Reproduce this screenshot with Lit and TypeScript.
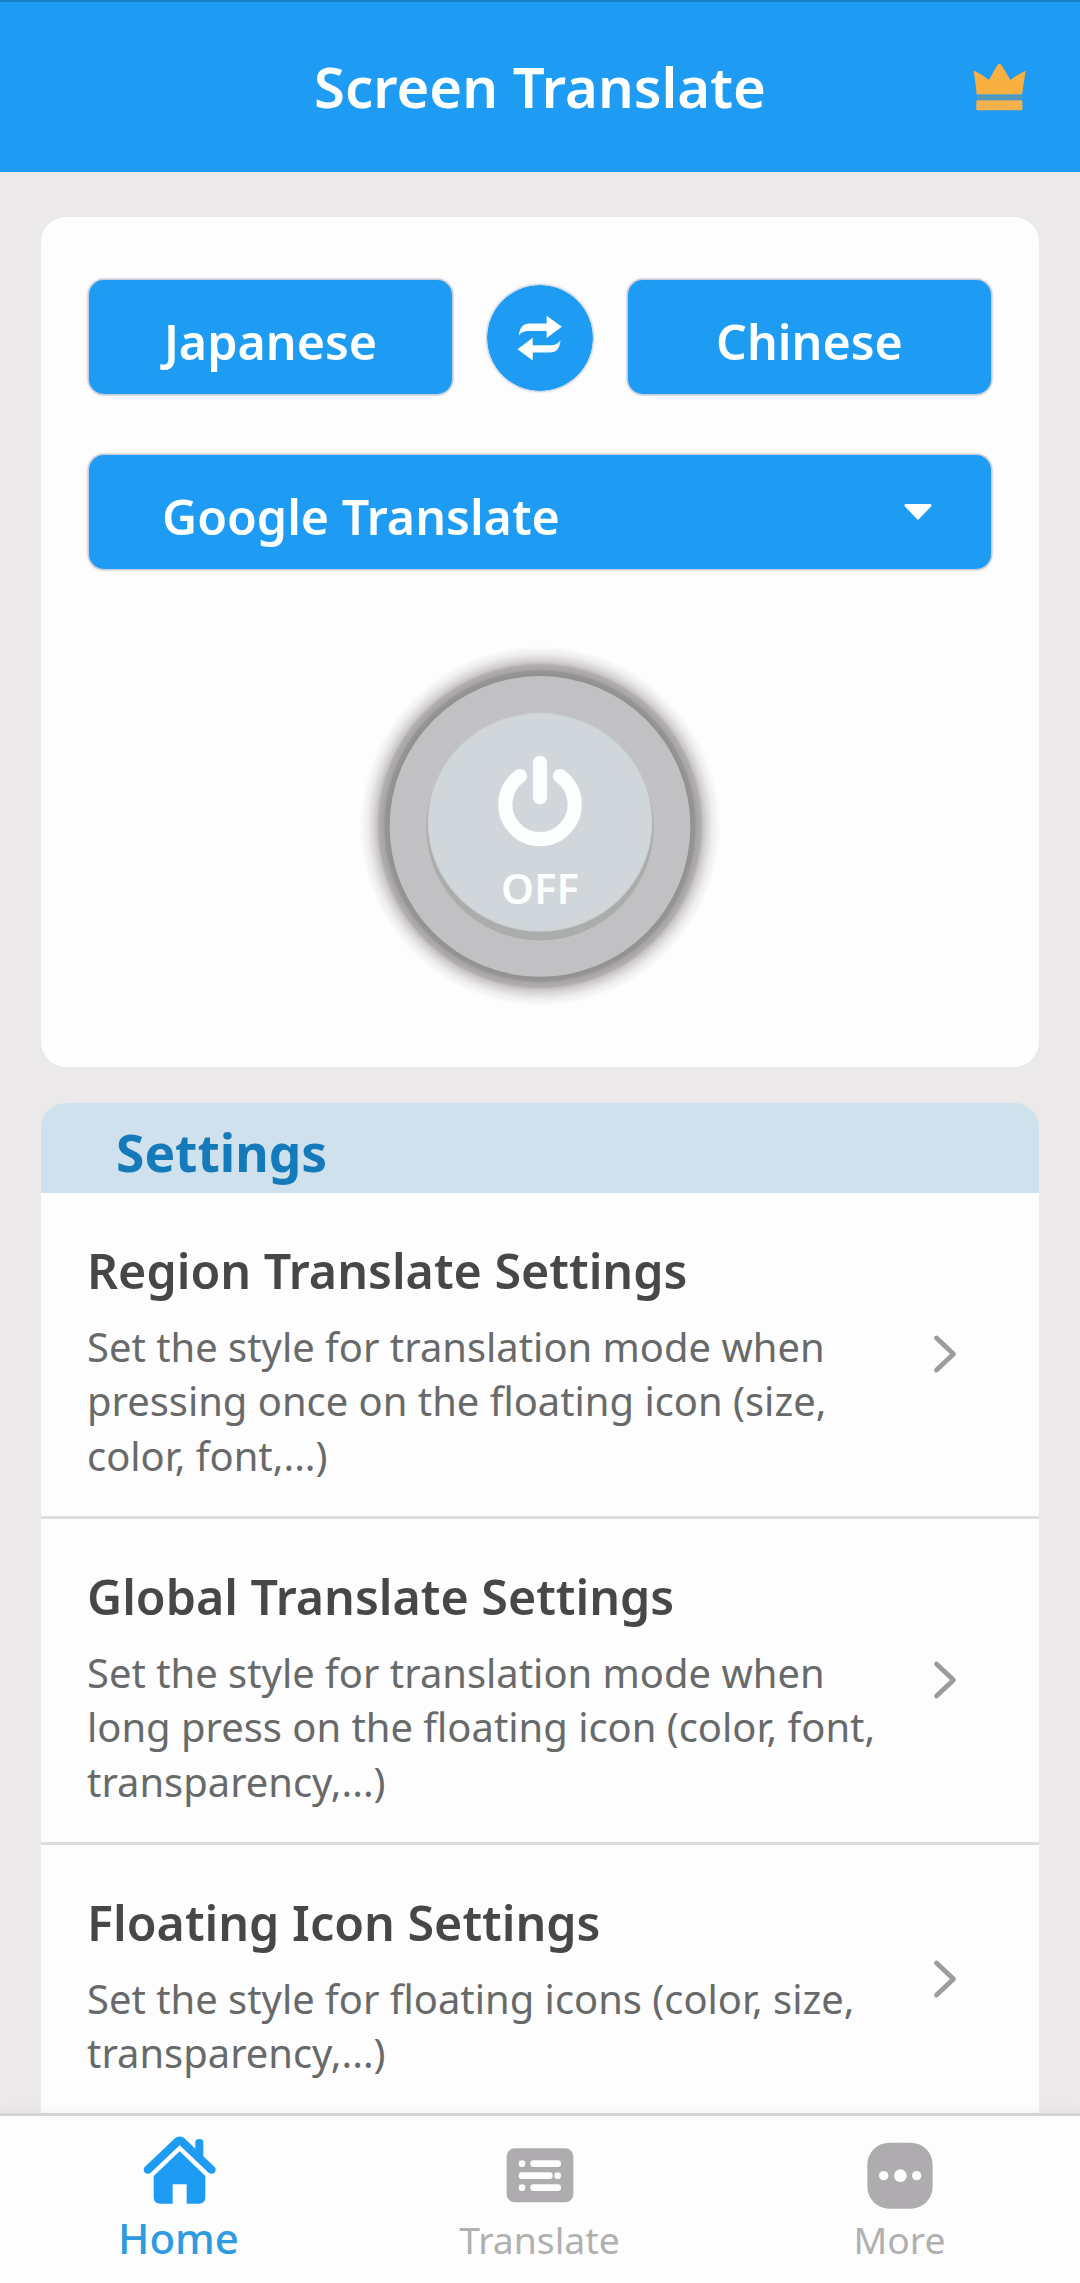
import { LitElement, html, css, svg } from "lit";
import { customElement, state } from "lit/decorators.js";
import { classMap } from "lit/directives/class-map.js";

interface SettingItem {
  title: string;
  lines: string[];
}

const SETTINGS: SettingItem[] = [
  {
    title: "Region Translate Settings",
    lines: [
      "Set the style for translation mode when",
      "pressing once on the floating icon (size,",
      "color, font,...)",
    ],
  },
  {
    title: "Global Translate Settings",
    lines: [
      "Set the style for translation mode when",
      "long press on the floating icon (color, font,",
      "transparency,...)",
    ],
  },
  {
    title: "Floating Icon Settings",
    lines: [
      "Set the style for floating icons (color, size,",
      "transparency,...)",
    ],
  },
];

const homeIcon = html`<svg class="tab-icon" viewBox="129 74 222 222">
  <path d="M143.5 178 L231 95 Q239 88 247 95 L334.5 178" fill="none" stroke="currentColor"
    stroke-width="25" stroke-linecap="round" stroke-linejoin="round" />
  <path d="M286 150 V96 Q286 86 298 86 Q310 86 310 96 V150 Z" fill="currentColor" />
  <path class="gap" d="M150 200 L239 115 L328 200" />
  <path d="M161 197 L239 123 L316 197 V261 Q316 280 297 280 H260 V222 H218 V280 H181 Q161 280 161 261 Z"
    fill="currentColor" />
</svg>`;

const translateIcon = html`<svg class="tab-icon" viewBox="189 74 222 222">
  <rect x="200" y="114" width="200" height="162" rx="24" fill="currentColor" />
  <g fill="#fdfdfd">
    <circle cx="246" cy="160" r="10" />
    <rect x="271" y="150" width="92" height="20" rx="9" />
    <rect x="236" y="186" width="102" height="20" rx="9" />
    <circle cx="353" cy="196" r="10" />
    <circle cx="246" cy="232" r="10" />
    <rect x="271" y="222" width="92" height="20" rx="9" />
  </g>
</svg>`;

const moreIcon = html`<svg class="tab-icon" viewBox="128 75 222 222">
  <rect x="141" y="98" width="196" height="198" rx="66" fill="currentColor" />
  <g fill="#fdfdfd">
    <circle cx="190" cy="197" r="14" />
    <circle cx="240" cy="197" r="19" />
    <circle cx="289" cy="197" r="14" />
  </g>
</svg>`;

const TABS = [
  { id: "home", label: "Home", icon: homeIcon },
  { id: "translate", label: "Translate", icon: translateIcon },
  { id: "more", label: "More", icon: moreIcon },
];

@customElement("power-button")
export class PowerButton extends LitElement {
  static styles = css`
    :host {
      display: block;
      width: 360px;
      height: 360px;
    }
    svg {
      display: block;
      width: 360px;
      height: 360px;
    }
    .caption {
      font: 600 42px "Noto Sans", sans-serif;
      fill: #fdfefe;
    }
  `;

  render() {
    return html`<svg viewBox="0 0 360 360" role="button">
      ${svg`
        <defs>
          <radialGradient id="halo" gradientUnits="userSpaceOnUse" cx="180" cy="180" r="180">
            <stop offset="0.83" stop-color="#918f90" />
            <stop offset="0.86" stop-color="#969495" />
            <stop offset="0.87" stop-color="#a6a4a5" />
            <stop offset="0.895" stop-color="#b0aeaf" />
            <stop offset="0.907" stop-color="#c8c6c7" />
            <stop offset="0.93" stop-color="#dbd9da" />
            <stop offset="0.96" stop-color="#efedee" />
            <stop offset="1" stop-color="#fdfdfd" />
          </radialGradient>
        </defs>
        <circle cx="180" cy="180.4" r="180" fill="url(#halo)" />
        <circle cx="180" cy="180.4" r="150.4" fill="#c1c1c3" />
        <circle cx="180" cy="180.7" r="113.7" fill="#abadad" />
        <ellipse cx="180" cy="176.2" rx="112.5" ry="109.6" fill="#c8cccd" />
        <ellipse cx="180" cy="176.2" rx="111.3" ry="108.6" fill="#d0d6d9" />
        <path d="M160 130 A34.7 34.7 0 1 0 200 130" fill="none" stroke="#fdfefe"
          stroke-width="14.2" stroke-linecap="round" />
        <path d="M180 116.8 V151.3" stroke="#fdfefe" stroke-width="14.2" stroke-linecap="round" />
        <text class="caption" x="180" y="257.5" text-anchor="middle">OFF</text>
      `}
    </svg>`;
  }
}

@customElement("setting-row")
export class SettingRow extends LitElement {
  static properties = { item: { attribute: false } };
  declare item: SettingItem;

  static styles = css`
    :host {
      display: flex;
      align-items: center;
      justify-content: space-between;
      box-sizing: border-box;
      padding: 44px 81px 33px 46px;
      border-bottom: 3px solid #dadcdd;
      background: #fdfdfd;
    }
    .title {
      font-size: 48.4px;
      font-weight: 600;
      line-height: 66px;
      color: #464848;
      white-space: nowrap;
    }
    .desc {
      margin-top: 17px;
      font-size: 39.9px;
      line-height: 54.33px;
      color: #686a6a;
    }
    .line {
      white-space: nowrap;
    }
    .chevron {
      flex: none;
      width: 26px;
      height: 42px;
      margin-bottom: 11px;
    }
  `;

  render() {
    return html`
      <div>
        <div class="title">${this.item.title}</div>
        <div class="desc">
          ${this.item.lines.map((l) => html`<div class="line">${l}</div>`)}
        </div>
      </div>
      <svg class="chevron" viewBox="0 0 26 42">
        <path d="M4.5 5 L21.5 21 L4.5 37" fill="none" stroke="#9a9c9d" stroke-width="4.8"
          stroke-linecap="round" stroke-linejoin="round" />
      </svg>
    `;
  }
}

@customElement("app-root")
export class AppRoot extends LitElement {
  @state() private active = "home";

  static styles = css`
    :host {
      display: flex;
      flex-direction: column;
      width: 1080px;
      height: 2283px;
      overflow: hidden;
      background: #ebe9e9;
      font-family: "Noto Sans", sans-serif;
    }
    .header {
      flex: none;
      display: grid;
      grid-template-columns: 1fr auto 1fr;
      align-items: center;
      box-sizing: border-box;
      height: 172px;
      border-top: 2px solid #1782c6;
      background: #1e9bf3;
    }
    .heading {
      grid-column: 2;
      margin: 0;
      font-size: 56.2px;
      font-weight: 600;
      line-height: 168px;
      padding-bottom: 2px;
      color: #fdfefe;
    }
    .crown {
      justify-self: end;
      width: 53px;
      height: 48px;
      margin-right: 54px;
    }
    .content {
      flex: 1;
      min-height: 0;
      overflow: hidden;
      padding: 45px 41px 0;
    }
    .card {
      display: flex;
      flex-direction: column;
      align-items: center;
      box-sizing: border-box;
      height: 850px;
      padding: 63px 48px 0;
      border-radius: 25px;
      background: #fdfdfd;
    }
    .languages {
      display: flex;
      align-items: center;
      justify-content: space-between;
      align-self: stretch;
    }
    .field {
      display: flex;
      align-items: center;
      box-sizing: border-box;
      height: 114px;
      padding-top: 8px;
      border-radius: 15px;
      background: #1e9bf3;
      box-shadow: 0 0 0 1.5px #c9cdd8, 0 0 3px 1px #d0d2dc;
      color: #fdfefe;
      font-size: 48.4px;
      font-weight: 600;
      white-space: nowrap;
    }
    .language {
      justify-content: center;
      width: 363px;
    }
    .swap {
      width: 106px;
      height: 106px;
      margin-top: 1px;
      border-radius: 50%;
      box-shadow: 0 0 2px 1px #c4cad8;
    }
    .engine {
      align-self: stretch;
      justify-content: space-between;
      margin-top: 61px;
      padding-top: 7px;
      padding-left: 73px;
      padding-right: 59px;
    }
    .caret {
      width: 28px;
      height: 16px;
      margin-bottom: 8px;
    }
    .power {
      margin-top: 77px;
    }
    .settings {
      margin-top: 36px;
      border-radius: 25px 25px 0 0;
      overflow: hidden;
    }
    .settings-title {
      display: flex;
      align-items: center;
      box-sizing: border-box;
      height: 90px;
      margin: 0;
      padding: 8px 0 0 75px;
      background: #cfe1ec;
      color: #157ab9;
      font-size: 51.5px;
      font-weight: 700;
    }
    .tabs {
      flex: none;
      z-index: 1;
      display: grid;
      grid-template-columns: repeat(3, 1fr);
      box-sizing: border-box;
      height: 170px;
      padding-top: 19px;
      border-top: 3px solid #d3d4d4;
      background: #fdfdfd;
      box-shadow: 0 -2px 12px rgba(0, 0, 0, 0.04);
    }
    .tab {
      display: flex;
      flex-direction: column;
      align-items: center;
      color: #aeacae;
    }
    .tab-icon {
      display: block;
      width: 74px;
      height: 74px;
    }
    .gap {
      fill: none;
      stroke: #fdfdfd;
      stroke-width: 12px;
    }
    .tab-label {
      margin-top: 6px;
      font-size: 37.3px;
      line-height: 50px;
      margin-right: 1px;
      color: #b0b0b0;
    }
    .tab.active {
      color: #1e9bf3;
    }
    .tab.active .tab-label {
      margin-top: 4px;
      margin-right: 3px;
      font-size: 42px;
      font-weight: 500;
      color: #2e9be0;
    }
  `;

  render() {
    return html`
      <header class="header">
        <h1 class="heading">Screen Translate</h1>
        <svg class="crown" viewBox="99 69 160 144">
          <path
            d="M101 91 Q125 102 147 120 L170 79 Q179 62 188 79 L212 120 Q232 104 258 92 Q253 126 247 164 H110 Q107 128 101 91 Z"
            fill="#fab041" />
          <rect x="110" y="167" width="138" height="12" fill="#5798b8" />
          <rect x="109" y="181" width="139" height="30" rx="2" fill="#f3b04c" />
        </svg>
      </header>
      <main class="content">
        <section class="card">
          <div class="languages">
            <div class="field language">Japanese</div>
            <svg class="swap" viewBox="51 43 320 320">
              <circle cx="211" cy="203" r="160" fill="#1e9bf3" />
              <path
                d="M147 196 C150 170 160 159 180 159 H231 V136 L277 169 L231 203 V182 H178 C163 182 155 185 147 196 Z"
                fill="#fdfefe" />
              <path
                d="M273 210 C270 235 262 247 240 247 H189 V271 L143 237 L189 202 V225 H240 C256 225 265 222 273 210 Z"
                fill="#fdfefe" />
            </svg>
            <div class="field language">Chinese</div>
          </div>
          <div class="field engine">
            <span>Google Translate</span>
            <svg class="caret" viewBox="0 0 28 16">
              <path d="M1.2 0 H26.8 Q28.3 1.2 27 2.6 L14 16 L1 2.6 Q-0.3 1.2 1.2 0 Z" fill="#fdfefe" />
            </svg>
          </div>
          <power-button class="power"></power-button>
        </section>
        <section class="settings">
          <h2 class="settings-title">Settings</h2>
          ${SETTINGS.map((item) => html`<setting-row .item=${item}></setting-row>`)}
        </section>
      </main>
      <nav class="tabs">
        ${TABS.map(
          (t) => html`<div
            class=${classMap({ tab: true, active: t.id === this.active })}
            @click=${() => (this.active = t.id)}
          >
            ${t.icon}
            <span class="tab-label">${t.label}</span>
          </div>`
        )}
      </nav>
    `;
  }
}
